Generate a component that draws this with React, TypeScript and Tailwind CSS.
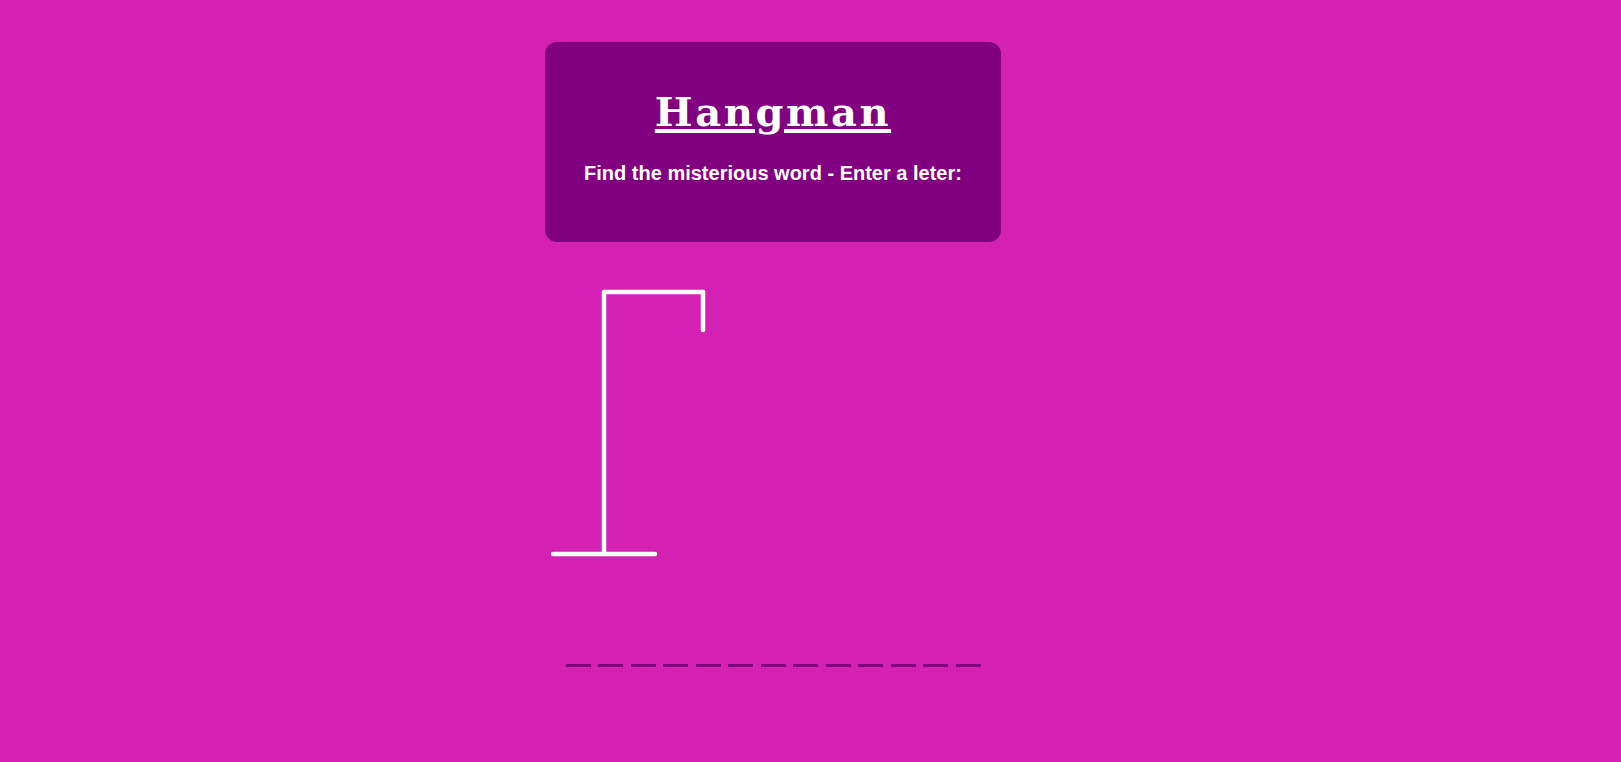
export default function App() {
  const slots = Array.from({ length: 13 });

  return (
    <div className="min-h-screen w-full bg-[#d421b3] pl-[545px] pt-[42px]">
      <div className="flex w-[456px] flex-col">
        <div className="flex h-[200px] flex-col items-center rounded-xl bg-[#800080] pt-[50px] text-white">
          <h1
            className="text-[40px] font-bold leading-none tracking-[0.065em] underline decoration-[4px] underline-offset-[3px]"
            style={{ fontFamily: '"DejaVu Serif", serif' }}
          >
            Hangman
          </h1>
          <h3
            className="mt-[26px] text-[20px] font-bold"
            style={{ fontFamily: '"Liberation Sans", Arial, sans-serif' }}
          >
            Find the misterious word - Enter a leter:
          </h3>
        </div>

        <svg width="456" height="320" className="block">
          <g stroke="#ffffff" strokeWidth="4.5" strokeLinecap="round" fill="none">
            <line x1="59" y1="50" x2="59" y2="312" />
            <line x1="59" y1="50" x2="158" y2="50" />
            <line x1="158" y1="50" x2="158" y2="88" />
            <line x1="8" y1="312" x2="110" y2="312" />
          </g>
        </svg>

        <div className="mt-[102px] flex justify-center gap-[7.5px]">
          {slots.map((_, i) => (
            <div key={i} className="h-[3px] w-[25px] bg-[#800080]" />
          ))}
        </div>
      </div>
    </div>
  );
}
